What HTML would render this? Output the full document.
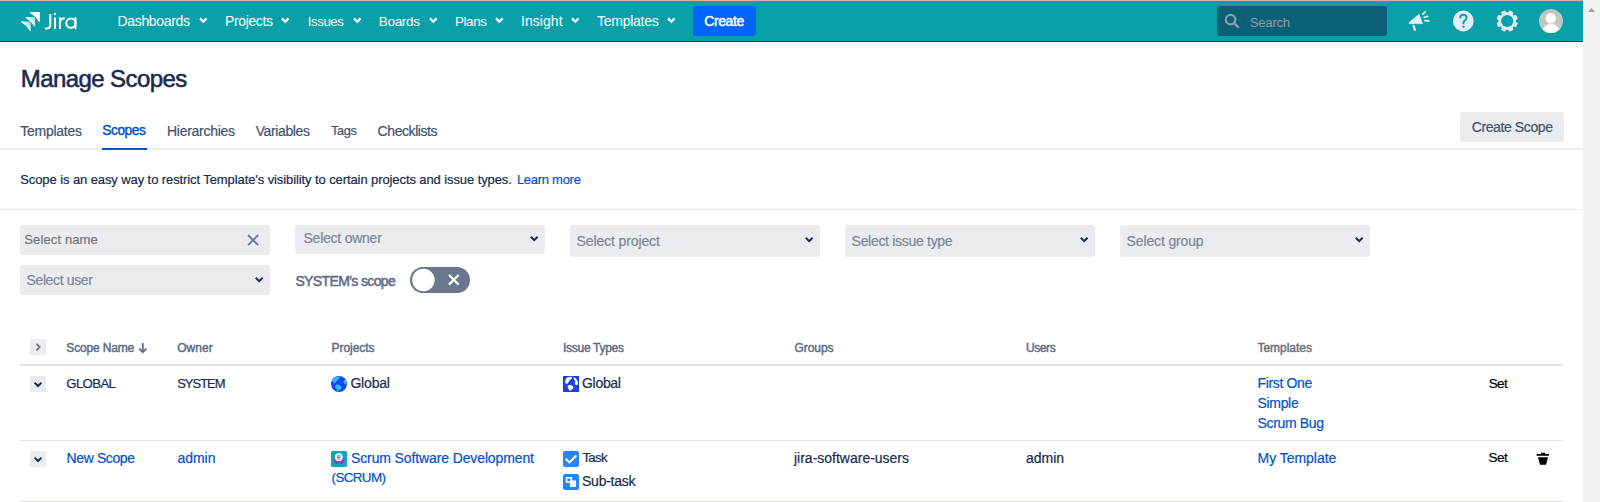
<!DOCTYPE html>
<html><head><meta charset="utf-8"><style>
html,body{margin:0;padding:0;width:1600px;height:502px;overflow:hidden;background:#fff;position:relative}
body{font-family:"Liberation Sans",sans-serif}
.t{position:absolute;white-space:nowrap;line-height:1}
.b{position:absolute;display:block}
</style></head><body>
<div class="b" style="left:0px;top:0px;width:1583px;height:1px;background:#d6b3b3;border-radius:0px;"></div>
<div class="b" style="left:0px;top:1px;width:1583px;height:40px;background:#0aa0a8;border-radius:0px;"></div>
<div class="b" style="left:0px;top:41px;width:1583px;height:1px;background:#243550;border-radius:0px;"></div>
<div class="b" style="left:1583px;top:0px;width:17px;height:502px;background:#f1f1f1;border-radius:0px;"></div>
<svg class="b" style="left:1583px;top:0" width="17" height="20"><polygon points="4.9,12 12,12 8.45,7.8" fill="#a3a3a3"/></svg>
<svg class="b" style="left:0;top:0" width="90" height="40">
<defs>
<linearGradient id="g1" x1="0" y1="1" x2="1" y2="0"><stop offset="0.5" stop-color="#fff"/><stop offset="1" stop-color="#fff" stop-opacity="0.45"/></linearGradient>
</defs>
<path d="M30.0 12.1 H39.8 V21.9 L39.2 21.9 Q35.8 16.1 30.0 12.7Z" fill="#fff"/>
<path d="M25.6 17.1 H35.1 V26.3 L34.5 26.3 Q31.1 20.9 25.6 17.7Z" fill="url(#g1)"/>
<path d="M20.9 21.4 H30.7 V31.0 L30.1 31.0 Q26.7 25.3 20.9 22.0Z" fill="url(#g1)"/>
<g stroke="#fff" stroke-width="2" fill="none">
<path d="M50.3 14 V25 Q50.3 28.4 47.2 28.4 H44.8"/>
<path d="M55 17.6 V29"/>
<path d="M60 17.6 V29 M60 22.5 Q60.5 18.3 64.8 18.3"/>
<circle cx="70.9" cy="23.2" r="4.6"/>
<path d="M75.5 17.3 V29"/>
</g>
<circle cx="55" cy="14" r="1.2" fill="#fff"/>
</svg>
<div class="t" style="left:117.50px;top:14.15px;font-size:14px;color:#ffffff;letter-spacing:-0.333px;">Dashboards</div>
<svg class="b" style="left:198.75px;top:17px" width="9" height="8"><path d="M1 1.4 L4.3 4.7 L7.6 1.4" stroke="#ffffff" stroke-width="2.3" fill="none"/></svg>
<div class="t" style="left:225.00px;top:14.15px;font-size:14px;color:#ffffff;letter-spacing:-0.371px;">Projects</div>
<svg class="b" style="left:281.00px;top:17px" width="9" height="8"><path d="M1 1.4 L4.3 4.7 L7.6 1.4" stroke="#ffffff" stroke-width="2.3" fill="none"/></svg>
<div class="t" style="left:307.75px;top:14.78px;font-size:13.25px;color:#ffffff;letter-spacing:-0.420px;">Issues</div>
<svg class="b" style="left:352.50px;top:17px" width="9" height="8"><path d="M1 1.4 L4.3 4.7 L7.6 1.4" stroke="#ffffff" stroke-width="2.3" fill="none"/></svg>
<div class="t" style="left:378.75px;top:14.57px;font-size:13.5px;color:#ffffff;letter-spacing:-0.310px;">Boards</div>
<svg class="b" style="left:428.75px;top:17px" width="9" height="8"><path d="M1 1.4 L4.3 4.7 L7.6 1.4" stroke="#ffffff" stroke-width="2.3" fill="none"/></svg>
<div class="t" style="left:455.00px;top:14.57px;font-size:13.5px;color:#ffffff;letter-spacing:-0.450px;">Plans</div>
<svg class="b" style="left:494.50px;top:17px" width="9" height="8"><path d="M1 1.4 L4.3 4.7 L7.6 1.4" stroke="#ffffff" stroke-width="2.3" fill="none"/></svg>
<div class="t" style="left:521.00px;top:14.15px;font-size:14px;color:#ffffff;letter-spacing:0.050px;">Insight</div>
<svg class="b" style="left:570.60px;top:17px" width="9" height="8"><path d="M1 1.4 L4.3 4.7 L7.6 1.4" stroke="#ffffff" stroke-width="2.3" fill="none"/></svg>
<div class="t" style="left:597.00px;top:14.15px;font-size:14px;color:#ffffff;letter-spacing:-0.256px;">Templates</div>
<svg class="b" style="left:667.00px;top:17px" width="9" height="8"><path d="M1 1.4 L4.3 4.7 L7.6 1.4" stroke="#ffffff" stroke-width="2.3" fill="none"/></svg>
<div class="b" style="left:693px;top:6px;width:63px;height:30px;background:#0065ff;border-radius:3px;"></div>
<div class="t" style="left:704.20px;top:14.15px;font-size:14px;color:#ffffff;-webkit-text-stroke:0.45px #ffffff;letter-spacing:-0.400px;">Create</div>
<div class="b" style="left:1217px;top:6px;width:170px;height:30px;background:#0a6076;border-radius:3px;"></div>
<svg class="b" style="left:1222px;top:11px" width="22" height="22"><circle cx="8.6" cy="8.6" r="4.8" stroke="#8b9cab" stroke-width="2.2" fill="none"/><path d="M12.2 12.2 L16 16" stroke="#8b9cab" stroke-width="2.4" stroke-linecap="round"/></svg>
<div class="t" style="left:1249.75px;top:15.78px;font-size:13.25px;color:#8e9cab;letter-spacing:-0.310px;">Search</div>
<svg class="b" style="left:1400px;top:6px" width="36" height="30">
<g transform="translate(-1400,-6)" fill="#e3ecfb" stroke="#e3ecfb">
<polygon points="1409,22.6 1419,14.2 1422.6,23.7 1409,23.7" stroke-width="0.6" stroke-linejoin="round"/>
<path d="M1413.2 25.2 L1415.2 30.6" stroke-width="2.2" fill="none"/>
<path d="M1422.9 14.2 L1425.2 11.9 M1424.2 17.3 L1427.5 16.3 M1424.9 20.6 L1428.8 21.2" stroke-width="1.8" stroke-linecap="round" fill="none"/>
</g></svg>
<svg class="b" style="left:1448px;top:6px" width="32" height="30">
<circle cx="15.3" cy="15" r="10.4" fill="#e3ecfb"/>
<path d="M12.2 12.2 Q12.2 8.8 15.4 8.8 Q18.6 8.8 18.6 11.8 Q18.6 13.6 16.6 14.6 Q15.4 15.3 15.4 17.2 V18.2" stroke="#0aa0a6" stroke-width="1.9" fill="none"/>
<circle cx="15.4" cy="20.6" r="1.2" fill="#0aa0a6"/>
</svg>
<svg class="b" style="left:1492px;top:6px" width="32" height="30">
<polygon points="16.43,6.79 17.45,4.85 20.79,6.23 20.14,8.33 21.87,10.06 23.97,9.41 25.35,12.75 23.41,13.77 23.41,16.23 25.35,17.25 23.97,20.59 21.87,19.94 20.14,21.67 20.79,23.77 17.45,25.15 16.43,23.21 13.97,23.21 12.95,25.15 9.61,23.77 10.26,21.67 8.53,19.94 6.43,20.59 5.05,17.25 6.99,16.23 6.99,13.77 5.05,12.75 6.43,9.41 8.53,10.06 10.26,8.33 9.61,6.23 12.95,4.85 13.97,6.79" fill="#e3ecfb" stroke="#e3ecfb" stroke-width="1" stroke-linejoin="round"/>
<circle cx="15.200000000000045" cy="15" r="6.1" fill="#0aa0a6"/>
</svg>
<svg class="b" style="left:1535px;top:6px" width="32" height="30">
<defs><clipPath id="ac"><circle cx="16" cy="15" r="12"/></clipPath></defs>
<circle cx="16" cy="15" r="12" fill="#c4c4c4"/>
<g clip-path="url(#ac)" fill="#fff">
<circle cx="15.8" cy="12.2" r="5.2"/>
<ellipse cx="16" cy="26.5" rx="9" ry="8.5"/>
</g></svg>
<div class="t" style="left:20.80px;top:67.48px;font-size:24px;color:#172B4D;-webkit-text-stroke:0.55px #172B4D;letter-spacing:-0.583px;">Manage Scopes</div>
<div class="b" style="left:0px;top:148px;width:1583px;height:2px;background:#ebecf0;border-radius:0px;"></div>
<div class="t" style="left:20.20px;top:124.15px;font-size:14px;color:#42526E;-webkit-text-stroke:0.2px #42526E;letter-spacing:-0.250px;">Templates</div>
<div class="t" style="left:102.20px;top:124.36px;font-size:13.75px;color:#0052CC;-webkit-text-stroke:0.4px #0052CC;letter-spacing:-0.420px;">Scopes</div>
<div class="t" style="left:167.00px;top:124.15px;font-size:14px;color:#42526E;-webkit-text-stroke:0.2px #42526E;letter-spacing:-0.280px;">Hierarchies</div>
<div class="t" style="left:255.70px;top:124.15px;font-size:14px;color:#42526E;-webkit-text-stroke:0.2px #42526E;letter-spacing:-0.375px;">Variables</div>
<div class="t" style="left:331.00px;top:125.21px;font-size:12.75px;color:#42526E;-webkit-text-stroke:0.2px #42526E;letter-spacing:-0.333px;">Tags</div>
<div class="t" style="left:377.60px;top:124.15px;font-size:14px;color:#42526E;-webkit-text-stroke:0.2px #42526E;letter-spacing:-0.422px;">Checklists</div>
<div class="b" style="left:102px;top:148px;width:45px;height:2px;background:#0052CC;border-radius:0px;"></div>
<div class="b" style="left:1460px;top:112px;width:104px;height:30px;background:#ebecf0;border-radius:3px;"></div>
<div class="t" style="left:1471.70px;top:120.45px;font-size:14px;color:#42526E;-webkit-text-stroke:0.2px #42526E;letter-spacing:-0.391px;">Create Scope</div>
<div class="t" style="left:20.25px;top:173.00px;font-size:13px;color:#172B4D;-webkit-text-stroke:0.2px #172B4D;letter-spacing:-0.094px;">Scope is an easy way to restrict Template's visibility to certain projects and issue types.</div>
<div class="t" style="left:516.90px;top:173.00px;font-size:13px;color:#0052CC;-webkit-text-stroke:0.2px #0052CC;letter-spacing:-0.278px;">Learn more</div>
<div class="b" style="left:0px;top:209px;width:1583px;height:1px;background:#ebecf0;border-radius:0px;"></div>
<div class="b" style="left:20px;top:225px;width:250px;height:30px;background:#ebecf0;border-radius:3px;"></div>
<div class="t" style="left:24.30px;top:233.00px;font-size:13px;color:#757575;-webkit-text-stroke:0.2px #757575;letter-spacing:0.120px;">Select name</div>
<svg class="b" style="left:246px;top:233px" width="14" height="14"><path d="M2 2 L12.2 12.2 M12.2 2 L2 12.2" stroke="#6b778c" stroke-width="1.8"/></svg>
<div class="b" style="left:295px;top:225px;width:250px;height:29px;background:#ebecf0;border-radius:3px;"></div>
<div class="t" style="left:303.50px;top:231.25px;font-size:14px;color:#7a869a;-webkit-text-stroke:0.2px #7a869a;letter-spacing:-0.236px;">Select owner</div>
<svg class="b" style="left:528.60px;top:235.00px" width="11" height="9"><path d="M1.8 1.8 L5.2 5.2 L8.6 1.8" stroke="#172B4D" stroke-width="2" fill="none"/></svg>
<div class="b" style="left:570px;top:225px;width:250px;height:32px;background:#ebecf0;border-radius:3px;"></div>
<div class="t" style="left:576.60px;top:234.35px;font-size:14px;color:#7a869a;-webkit-text-stroke:0.2px #7a869a;letter-spacing:-0.123px;">Select project</div>
<svg class="b" style="left:804.00px;top:236.40px" width="11" height="9"><path d="M1.8 1.8 L5.2 5.2 L8.6 1.8" stroke="#172B4D" stroke-width="2" fill="none"/></svg>
<div class="b" style="left:845px;top:225px;width:250px;height:32px;background:#ebecf0;border-radius:3px;"></div>
<div class="t" style="left:851.60px;top:234.35px;font-size:14px;color:#7a869a;-webkit-text-stroke:0.2px #7a869a;letter-spacing:-0.300px;">Select issue type</div>
<svg class="b" style="left:1079.00px;top:236.40px" width="11" height="9"><path d="M1.8 1.8 L5.2 5.2 L8.6 1.8" stroke="#172B4D" stroke-width="2" fill="none"/></svg>
<div class="b" style="left:1120px;top:225px;width:250px;height:32px;background:#ebecf0;border-radius:3px;"></div>
<div class="t" style="left:1126.60px;top:234.35px;font-size:14px;color:#7a869a;-webkit-text-stroke:0.2px #7a869a;letter-spacing:-0.145px;">Select group</div>
<svg class="b" style="left:1354.00px;top:236.40px" width="11" height="9"><path d="M1.8 1.8 L5.2 5.2 L8.6 1.8" stroke="#172B4D" stroke-width="2" fill="none"/></svg>
<div class="b" style="left:20px;top:265px;width:250px;height:30px;background:#ebecf0;border-radius:3px;"></div>
<div class="t" style="left:26.50px;top:273.15px;font-size:14px;color:#7a869a;-webkit-text-stroke:0.2px #7a869a;letter-spacing:-0.370px;">Select user</div>
<svg class="b" style="left:253.60px;top:276.40px" width="11" height="9"><path d="M1.8 1.8 L5.2 5.2 L8.6 1.8" stroke="#172B4D" stroke-width="2" fill="none"/></svg>
<div class="t" style="left:295.40px;top:274.15px;font-size:14px;color:#5E6C84;-webkit-text-stroke:0.5px #5E6C84;letter-spacing:-0.623px;">SYSTEM's scope</div>
<svg class="b" style="left:408px;top:265px" width="64" height="30">
<rect x="2" y="2" width="60" height="26" rx="13" fill="#6b778c"/>
<circle cx="15.4" cy="15" r="11.9" fill="#fff" stroke="#6b778c" stroke-width="1.3"/>
<path d="M41 10 L50.6 19.6 M50.6 10 L41 19.6" stroke="#fff" stroke-width="2.2"/>
</svg>
<div class="b" style="left:30px;top:339px;width:16px;height:16px;background:#ebecf0;border-radius:0px;"></div>
<svg class="b" style="left:30px;top:339px" width="16" height="16"><path d="M6.4 4.6 L9.6 8 L6.4 11.4" stroke="#6b778c" stroke-width="1.8" fill="none"/></svg>
<div class="t" style="left:66.30px;top:341.84px;font-size:12px;color:#5E6C84;-webkit-text-stroke:0.45px #5E6C84;letter-spacing:-0.167px;">Scope Name</div>
<svg class="b" style="left:136px;top:340px" width="14" height="15"><path d="M6.8 3 V12" stroke="#5E6C84" stroke-width="1.8"/><path d="M3.2 8.6 L6.8 12.2 L10.4 8.6" stroke="#5E6C84" stroke-width="1.8" fill="none"/></svg>
<div class="t" style="left:177.20px;top:341.84px;font-size:12px;color:#5E6C84;-webkit-text-stroke:0.45px #5E6C84;letter-spacing:0.025px;">Owner</div>
<div class="t" style="left:331.60px;top:341.84px;font-size:12px;color:#5E6C84;-webkit-text-stroke:0.45px #5E6C84;letter-spacing:-0.071px;">Projects</div>
<div class="t" style="left:563.00px;top:341.84px;font-size:12px;color:#5E6C84;-webkit-text-stroke:0.45px #5E6C84;letter-spacing:-0.280px;">Issue Types</div>
<div class="t" style="left:794.40px;top:341.84px;font-size:12px;color:#5E6C84;-webkit-text-stroke:0.45px #5E6C84;letter-spacing:-0.040px;">Groups</div>
<div class="t" style="left:1026.00px;top:341.84px;font-size:12px;color:#5E6C84;-webkit-text-stroke:0.45px #5E6C84;letter-spacing:-0.425px;">Users</div>
<div class="t" style="left:1257.50px;top:341.84px;font-size:12px;color:#6b6e76;-webkit-text-stroke:0.45px #6b6e76;letter-spacing:-0.037px;">Templates</div>
<div class="b" style="left:20px;top:364px;width:1543px;height:2px;background:#dfe1e6;border-radius:0px;"></div>
<div class="b" style="left:30px;top:376px;width:16px;height:16px;background:#ebecf0;border-radius:0px;"></div>
<svg class="b" style="left:30px;top:376px" width="16" height="16"><path d="M4.6 6.6 L8 10 L11.4 6.6" stroke="#172B4D" stroke-width="2" fill="none"/></svg>
<div class="t" style="left:66.30px;top:376.78px;font-size:13.25px;color:#172B4D;-webkit-text-stroke:0.2px #172B4D;letter-spacing:-0.680px;">GLOBAL</div>
<div class="t" style="left:177.20px;top:377.00px;font-size:13.0px;color:#172B4D;-webkit-text-stroke:0.2px #172B4D;letter-spacing:-1.020px;">SYSTEM</div>
<svg class="b" style="left:331px;top:376px" width="16" height="16">
<defs><clipPath id="gc"><circle cx="8" cy="8" r="8"/></clipPath></defs>
<circle cx="8" cy="8" r="8" fill="#1747f2"/>
<g clip-path="url(#gc)" fill="#24c2f7">
<polygon points="2,3.2 5.2,0.8 9.6,0.4 8.4,2 6,4.4 5.2,6 3.6,7.2 2.4,6.8 1.2,4.8"/>
<polygon points="4,10 5.2,8.4 8,8.8 10.8,10.8 10,12.7 7.6,14.7 6.4,15.5 6,14 4.4,11.6"/>
<polygon points="12.7,4.8 14.7,3.2 15.9,6 15.5,8.4 13.5,8 12.7,6.4"/>
</g></svg>
<div class="t" style="left:350.40px;top:376.15px;font-size:14px;color:#172B4D;-webkit-text-stroke:0.2px #172B4D;letter-spacing:-0.180px;">Global</div>
<svg class="b" style="left:563px;top:376px" width="16" height="16">
<rect x="0" y="0" width="16" height="16" fill="#1f40e2"/>
<g fill="#fff">
<polygon points="2.0,6.2 2.6,3.6 4.2,1.6 6.4,0.9 9.2,0.8 9.0,2.6 7.6,3.6 6.4,4.6 5.2,6.8 4.2,8 2.8,7.6"/>
<polygon points="4.6,10 6.6,8.8 9,9.6 10.6,11.2 9.6,13 7.8,14.2 6.8,15 5.8,13.4 4.8,11.6"/>
<polygon points="10.4,1.2 12.8,2.2 14.2,4.4 15,6.4 14.6,8.8 12.8,9.2 11.8,7.4 12.4,5.6 11,3.4"/>
</g></svg>
<div class="t" style="left:582.00px;top:376.15px;font-size:14px;color:#172B4D;-webkit-text-stroke:0.2px #172B4D;letter-spacing:-0.300px;">Global</div>
<div class="t" style="left:1257.50px;top:376.15px;font-size:14px;color:#0052CC;-webkit-text-stroke:0.2px #0052CC;letter-spacing:-0.350px;">First One</div>
<div class="t" style="left:1257.50px;top:396.15px;font-size:14px;color:#0052CC;-webkit-text-stroke:0.2px #0052CC;letter-spacing:-0.320px;">Simple</div>
<div class="t" style="left:1257.50px;top:415.85px;font-size:14px;color:#0052CC;-webkit-text-stroke:0.2px #0052CC;letter-spacing:-0.350px;">Scrum Bug</div>
<div class="t" style="left:1488.70px;top:376.57px;font-size:13.5px;color:#000000;-webkit-text-stroke:0.2px #000000;letter-spacing:-0.600px;">Set</div>
<div class="b" style="left:20px;top:440px;width:1543px;height:1px;background:#dfe1e6;border-radius:0px;"></div>
<div class="b" style="left:30px;top:451px;width:16px;height:16px;background:#ebecf0;border-radius:0px;"></div>
<svg class="b" style="left:30px;top:451px" width="16" height="16"><path d="M4.6 6.6 L8 10 L11.4 6.6" stroke="#172B4D" stroke-width="2" fill="none"/></svg>
<div class="t" style="left:66.60px;top:450.55px;font-size:14px;color:#0052CC;-webkit-text-stroke:0.2px #0052CC;letter-spacing:-0.400px;">New Scope</div>
<div class="t" style="left:177.40px;top:450.55px;font-size:14px;color:#0052CC;-webkit-text-stroke:0.2px #0052CC;letter-spacing:-0.025px;">admin</div>
<svg class="b" style="left:331px;top:451px" width="16" height="16">
<rect x="0" y="0" width="16" height="16" rx="1.6" fill="#13a4bb"/>
<ellipse cx="8" cy="9.2" rx="6" ry="3" fill="#8a40c8"/>
<path d="M4.4 11.2 L5 13 L6.2 13 L6.6 11.8 Z M9.4 11.8 L9.8 13 L11 13 L11.6 11.2 Z" fill="#6d2fb0"/>
<circle cx="7.8" cy="6.2" r="3.9" fill="#f2f6ff"/>
<rect x="5.8" y="3.8" width="3.8" height="5" rx="1.2" fill="#8fb5f0"/>
<rect x="6.6" y="6.1" width="2.2" height="0.6" fill="#5a6a90"/>
</svg>
<div class="t" style="left:351.00px;top:450.55px;font-size:14px;color:#0052CC;-webkit-text-stroke:0.2px #0052CC;letter-spacing:-0.120px;">Scrum Software Development</div>
<div class="t" style="left:331.60px;top:470.97px;font-size:13.5px;color:#0052CC;-webkit-text-stroke:0.2px #0052CC;letter-spacing:-0.683px;">(SCRUM)</div>
<svg class="b" style="left:563px;top:451px" width="16" height="16">
<rect x="0" y="0" width="16" height="16" rx="2" fill="#2684ff"/>
<path d="M2.6 7.8 L6.4 11.4 L13.4 4.6" stroke="#fff" stroke-width="2.1" fill="none"/>
</svg>
<div class="t" style="left:582.40px;top:451.18px;font-size:13.25px;color:#172B4D;-webkit-text-stroke:0.2px #172B4D;letter-spacing:-0.667px;">Task</div>
<svg class="b" style="left:563px;top:474px" width="16" height="16">
<rect x="0" y="0" width="16" height="16" rx="2" fill="#2684ff"/>
<rect x="3.6" y="3.8" width="4.8" height="4.2" fill="none" stroke="#fff" stroke-width="1.6"/>
<rect x="6.9" y="6.4" width="6.1" height="6.6" fill="#fff"/>
</svg>
<div class="t" style="left:582.00px;top:473.75px;font-size:14px;color:#172B4D;-webkit-text-stroke:0.2px #172B4D;letter-spacing:-0.243px;">Sub-task</div>
<div class="t" style="left:794.00px;top:450.55px;font-size:14px;color:#172B4D;-webkit-text-stroke:0.2px #172B4D;letter-spacing:-0.006px;">jira-software-users</div>
<div class="t" style="left:1026.00px;top:450.55px;font-size:14px;color:#172B4D;-webkit-text-stroke:0.2px #172B4D;letter-spacing:-0.025px;">admin</div>
<div class="t" style="left:1257.50px;top:450.55px;font-size:14px;color:#0052CC;-webkit-text-stroke:0.2px #0052CC;letter-spacing:-0.030px;">My Template</div>
<div class="t" style="left:1488.60px;top:450.97px;font-size:13.5px;color:#000000;-webkit-text-stroke:0.2px #000000;letter-spacing:-0.550px;">Set</div>
<svg class="b" style="left:1536px;top:452px" width="15" height="14">
<path d="M0.6 2 H12.9 V3.8 H0.6Z M5 0.8 H9 V2 H5Z M2 5.2 H12 L10 12.7 H4Z" fill="#000"/>
</svg>
<div class="b" style="left:20px;top:501px;width:1543px;height:1px;background:#dfe1e6;border-radius:0px;"></div>
</body></html>
